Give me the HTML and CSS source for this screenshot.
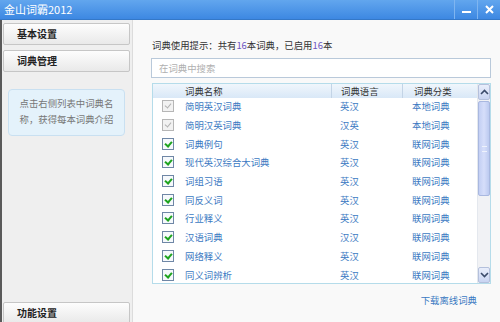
FILE: index.html
```html
<!DOCTYPE html>
<html lang="zh">
<head>
    <meta charset="UTF-8">
    <title>金山词霸2012</title>
    <link rel="stylesheet" href="styles.css">
</head>
<body>
<div class="window">
    <div class="titlebar">
        <span class="title">金山词霸2012</span>
        <div class="win-btns">
            <span class="win-btn">
                <svg width="11" height="11" viewBox="0 0 11 11"><rect x="1" y="7" width="9" height="2" fill="#fff"/></svg>
            </span>
            <span class="win-btn">
                <svg width="11" height="11" viewBox="0 0 11 11"><path d="M2 2 L9 9 M9 2 L2 9" stroke="#fff" stroke-width="2"/></svg>
            </span>
        </div>
    </div>
    <div class="main">
        <div class="sidebar">
            <div class="side-btn">基本设置</div>
            <div class="side-btn">词典管理</div>
            <div class="info-box">点击右侧列表中词典名称，获得每本词典介绍</div>
            <div class="spacer"></div>
            <div class="side-btn bottom">功能设置</div>
        </div>
        <div class="content">
            <div class="hint">词典使用提示：共有<span class="num">16</span>本词典，已启用<span class="num">16</span>本</div>
            <div class="search">在词典中搜索</div>
            <div class="table">
                <div class="list">
                    <div class="row head">
                        <span class="c-chk"></span>
                        <span class="c-name sep">词典名称</span>
                        <span class="c-lang sep">词典语言</span>
                        <span class="c-cat">词典分类</span>
                    </div>
                    <div class="row"><span class="c-chk"><i class="chk off"></i></span><span class="c-name">简明英汉词典</span><span class="c-lang">英汉</span><span class="c-cat">本地词典</span></div>
                    <div class="row"><span class="c-chk"><i class="chk off"></i></span><span class="c-name">简明汉英词典</span><span class="c-lang">汉英</span><span class="c-cat">本地词典</span></div>
                    <div class="row"><span class="c-chk"><i class="chk"></i></span><span class="c-name">词典例句</span><span class="c-lang">英汉</span><span class="c-cat">联网词典</span></div>
                    <div class="row"><span class="c-chk"><i class="chk"></i></span><span class="c-name">现代英汉综合大词典</span><span class="c-lang">英汉</span><span class="c-cat">联网词典</span></div>
                    <div class="row"><span class="c-chk"><i class="chk"></i></span><span class="c-name">词组习语</span><span class="c-lang">英汉</span><span class="c-cat">联网词典</span></div>
                    <div class="row"><span class="c-chk"><i class="chk"></i></span><span class="c-name">同反义词</span><span class="c-lang">英汉</span><span class="c-cat">联网词典</span></div>
                    <div class="row"><span class="c-chk"><i class="chk"></i></span><span class="c-name">行业释义</span><span class="c-lang">英汉</span><span class="c-cat">联网词典</span></div>
                    <div class="row"><span class="c-chk"><i class="chk"></i></span><span class="c-name">汉语词典</span><span class="c-lang">汉汉</span><span class="c-cat">联网词典</span></div>
                    <div class="row"><span class="c-chk"><i class="chk"></i></span><span class="c-name">网络释义</span><span class="c-lang">英汉</span><span class="c-cat">联网词典</span></div>
                    <div class="row"><span class="c-chk"><i class="chk"></i></span><span class="c-name">同义词辨析</span><span class="c-lang">英汉</span><span class="c-cat">联网词典</span></div>
                </div>
                <div class="scrollbar">
                    <div class="sb-btn">
                        <svg width="9" height="6" viewBox="0 0 9 6"><path d="M1 5 L4.5 1.5 L8 5" fill="none" stroke="#3a4a6a" stroke-width="1.6"/></svg>
                    </div>
                    <div class="sb-thumb"><span class="grip"></span></div>
                    <div class="sb-track"></div>
                    <div class="sb-btn">
                        <svg width="9" height="6" viewBox="0 0 9 6"><path d="M1 1 L4.5 4.5 L8 1" fill="none" stroke="#3a4a6a" stroke-width="1.6"/></svg>
                    </div>
                </div>
            </div>
            <div class="download">下载离线词典</div>
        </div>
    </div>
</div>
</body>
</html>
```

FILE: styles.css
```css
body {
    margin: 0;
    padding: 0;
    font-family: "Noto Sans CJK SC", "Liberation Sans", sans-serif;
    font-size: 9.4px;
    overflow: hidden;
}

.window {
    width: 500px;
    height: 322px;
    display: flex;
    flex-direction: column;
    background-color: #f9f9f9;
}

.titlebar {
    height: 19px;
    background: linear-gradient(#62a6ee, #3d88e2);
    display: flex;
    justify-content: space-between;
    align-items: center;
    border-bottom: 1px solid #3478c8;
}

.title {
    color: #fff;
    font-size: 11px;
    padding-left: 4px;
    line-height: 19px;
}

.win-btns {
    display: flex;
    height: 19px;
}

.win-btn {
    width: 22px;
    display: flex;
    align-items: center;
    justify-content: center;
    border-left: 1px solid #7fb5f0;
}

.main {
    flex: 1;
    display: flex;
    min-height: 0;
}

.sidebar {
    width: 127px;
    padding: 3px 2px 0 1px;
    display: flex;
    flex-direction: column;
    background-color: #efefef;
    border-left: 2px solid #5a5a5a;
    border-right: 1px solid #dcdcdc;
}

.side-btn {
    height: 20px;
    line-height: 20px;
    padding-left: 13px;
    font-weight: bold;
    font-size: 10px;
    color: #222;
    background: linear-gradient(#fdfdfd, #e9e9e9);
    border: 1px solid #c6c6c6;
    border-radius: 2px;
    margin-bottom: 5px;
}

.side-btn.bottom {
    margin-bottom: -2px;
    height: 20px;
}

.info-box {
    margin: 12px 5px 0 5px;
    padding: 5px 8px;
    height: 35px;
    background-color: #e4f2fb;
    border: 1px solid #c9e0f1;
    border-radius: 4px;
    color: #777;
    line-height: 16px;
    text-align: center;
}

.spacer {
    flex: 1;
}

.content {
    flex: 1;
    padding: 19px 9px 0 18px;
    display: flex;
    flex-direction: column;
}

.hint {
    height: 13px;
    line-height: 13px;
    color: #333;
    padding-left: 1px;
}

.num {
    color: #6b55c0;
}

.search {
    margin-top: 6px;
    height: 18px;
    line-height: 18px;
    border: 1px solid #b9c9da;
    background-color: #fff;
    color: #b0b0b0;
    padding-left: 7px;
}

.table {
    margin-top: 5px;
    margin-left: 1px;
    height: 199px;
    border: 1px solid #b5dcea;
    background-color: #fff;
    display: flex;
}

.list {
    flex: 1;
}

.row {
    height: 18.7px;
    display: flex;
    align-items: center;
    color: #3b79c2;
}

.row.head {
    height: 14px;
    color: #333;
    background: linear-gradient(#f0f6fc, #d9e8f7);
    margin-bottom: -1px;
}

.c-chk {
    width: 24px;
    display: flex;
    justify-content: center;
    padding-left: 3px;
}

.c-name {
    width: 146px;
    padding-left: 5px;
}

.c-lang {
    width: 61px;
    padding-left: 9px;
}

.c-cat {
    padding-left: 11px;
}

.sep {
    border-right: 1px solid #c3d4e6;
}

.chk {
    display: block;
    width: 10px;
    height: 10px;
    border: 1px solid #6f87a6;
    background-color: #f6f9fc;
    position: relative;
}

.chk::after {
    content: "";
    position: absolute;
    left: 3px;
    top: 1px;
    width: 3px;
    height: 5px;
    border-right: 2px solid #1ea31e;
    border-bottom: 2px solid #1ea31e;
    transform: rotate(40deg);
}

.chk.off {
    border-color: #b6b6b6;
    background-color: #f2f2f2;
}

.chk.off::after {
    border-color: #b2b2b2;
    border-width: 0 1.5px 1.5px 0;
}

.scrollbar {
    width: 12px;
    display: flex;
    flex-direction: column;
    background-color: #f1f2f5;
    border-left: 1px solid #e4e8ee;
}

.sb-btn {
    height: 14px;
    display: flex;
    align-items: center;
    justify-content: center;
    background: linear-gradient(#e9eefb, #c9d4f2);
    border: 1px solid #b4c0dc;
    border-radius: 2px;
}

.sb-thumb {
    height: 93px;
    margin-top: 1px;
    background: linear-gradient(90deg, #c3cff3, #d6defa, #bccaf0);
    border: 1px solid #a9b8e0;
    border-radius: 2px;
    display: flex;
    align-items: center;
    justify-content: center;
}

.grip {
    width: 5px;
    height: 4px;
    border-top: 1px solid #eef2fc;
    border-bottom: 1px solid #eef2fc;
}

.sb-track {
    flex: 1;
}

.download {
    margin-top: 9px;
    text-align: right;
    padding-right: 14px;
    color: #3b79c2;
}
```
